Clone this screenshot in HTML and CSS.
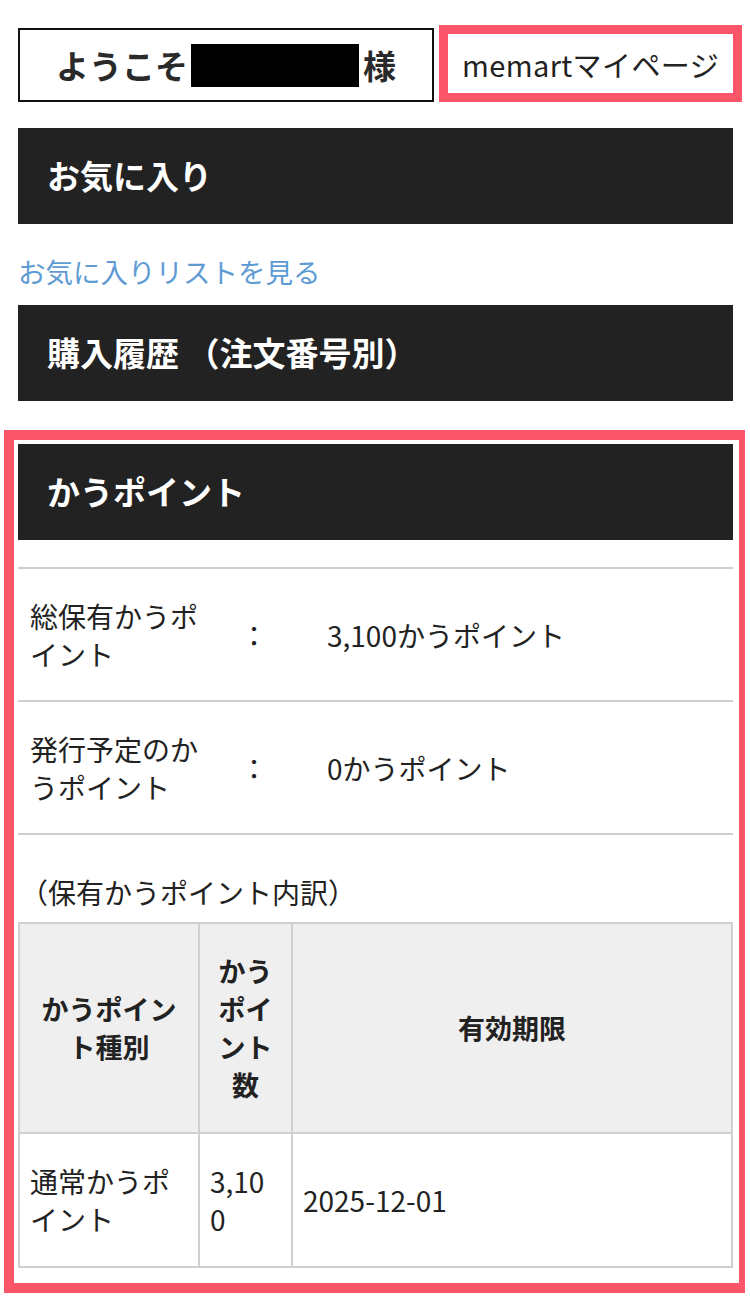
FILE: index.html
```html
<!DOCTYPE html>
<html lang="ja">
<head>
<meta charset="utf-8">
<title>マイページ</title>
<link rel="stylesheet" href="styles.css">
</head>
<body>
<div class="top">
  <div class="welcome">ようこそ<span class="redact"></span>様</div>
  <a class="mypage" href="#">memartマイページ</a>
</div>

<h2 class="bar">お気に入り</h2>
<a class="link" href="#">お気に入りリストを見る</a>

<h2 class="bar">購入履歴 （注文番号別）</h2>

<section class="highlight">
  <h2 class="bar">かうポイント</h2>
  <div class="rows">
    <div class="row">
      <div class="label">総保有かうポイント</div>
      <div class="colon">：</div>
      <div class="value">3,100かうポイント</div>
    </div>
    <div class="row">
      <div class="label">発行予定のかうポイント</div>
      <div class="colon">：</div>
      <div class="value">0かうポイント</div>
    </div>
  </div>
  <p class="note">（保有かうポイント内訳）</p>
  <table class="points">
    <colgroup>
      <col class="c1"><col class="c2"><col class="c3">
    </colgroup>
    <thead>
      <tr><th>かうポイント種別</th><th>かうポイント数</th><th>有効期限</th></tr>
    </thead>
    <tbody>
      <tr><td>通常かうポイント</td><td>3,100</td><td>2025-12-01</td></tr>
    </tbody>
  </table>
</section>
</body>
</html>
```

FILE: styles.css
```css
* { box-sizing: border-box; }

html, body {
  margin: 0;
  padding: 0;
  background: #fff;
}

body {
  padding: 0 17px 0 18px;
  font-family: "Noto Sans CJK JP", "Noto Sans", sans-serif;
  font-size: 28px;
  line-height: 38px;
  color: #222;
}

.top {
  display: flex;
  align-items: flex-end;
  gap: 5px;
  padding-top: 25px;
}

.welcome {
  width: 416px;
  height: 74px;
  border: 2px solid #111;
  display: flex;
  align-items: center;
  justify-content: center;
  font-size: 33px;
  font-weight: 700;
  color: #2a2a2a;
  flex-shrink: 0;
}

.redact {
  display: inline-block;
  width: 168px;
  height: 43px;
  background: #000;
  margin: 0 4px 0 3px;
}

.mypage {
  width: 303px;
  height: 77px;
  border: 9px solid #fb5569;
  display: flex;
  align-items: center;
  justify-content: center;
  color: #222;
  text-decoration: none;
  font-size: 29px;
  letter-spacing: 0.4px;
  flex-shrink: 0;
}

.bar {
  margin: 0;
  height: 96px;
  background: #222;
  color: #fff;
  font-size: 33px;
  font-weight: 700;
  line-height: 94px;
  padding-left: 29px;
}

.top + .bar { margin-top: 26px; }

.link {
  display: block;
  margin: 28px 0 15px 0;
  color: #5f9bd3;
  text-decoration: none;
  font-size: 27.5px;
  line-height: 38px;
}

.highlight {
  margin: 29px -12px 0 -14px;
  border-style: solid;
  border-color: #fb5569;
  border-width: 10px 6px 10px 10px;
  padding: 4px 6px 15px 4px;
}

.rows {
  margin-top: 27px;
  border-bottom: 2px solid #cfcfcf;
}

.row {
  display: grid;
  grid-template-columns: 180px 88px 1fr;
  align-items: center;
  border-top: 2px solid #cfcfcf;
  padding: 28px 0 27px 12px;
  min-height: 133px;
}

.colon { text-align: center; }

.value { padding-left: 29px; }

.note {
  margin: 38px 0 11px 0;
  padding-left: 2px;
}

.points {
  width: 100%;
  border-collapse: collapse;
  table-layout: fixed;
}

.points col.c1 { width: 180px; }
.points col.c2 { width: 93px; }

.points th,
.points td {
  border: 2px solid #d0d0d0;
  padding: 28px 13px 28px 10px;
  vertical-align: middle;
  word-break: break-all;
}

.points th {
  background: #efefef;
  font-weight: 700;
  text-align: center;
  font-size: 27px;
  padding-right: 10px;
}

.points td { text-align: left; }
```
